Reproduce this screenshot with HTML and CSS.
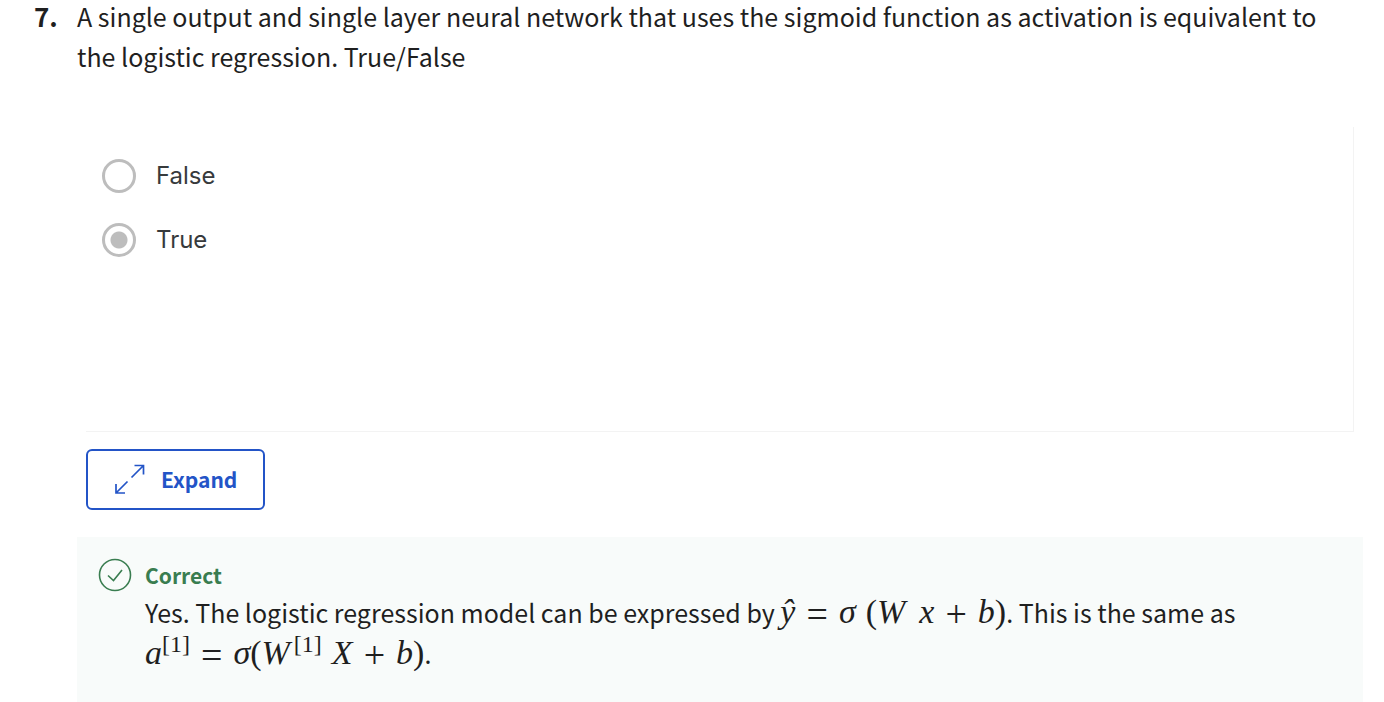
FILE: index.html
```html
<!DOCTYPE html>
<html lang="en">
<head>
<meta charset="utf-8">
<meta name="viewport" content="width=device-width, initial-scale=1">
<title>Quiz question</title>
<link rel="stylesheet" href="styles.css">
</head>
<body>
<main class="question">
  <div class="number">7.</div>
  <div class="body">
    <p class="prompt" id="prompt">A single output and single layer neural network that uses the sigmoid function as activation is equivalent to the logistic regression. True/False</p>
    <div class="options" role="radiogroup" aria-labelledby="prompt">
      <label class="option"><input class="radio" type="radio" name="answer"><span>False</span></label>
      <label class="option"><input class="radio" type="radio" name="answer" checked><span>True</span></label>
    </div>
    <button class="expand" type="button">
      <svg class="expand-icon" viewBox="0 0 32 32" aria-hidden="true"><path d="M17.5 13.500 29.5 1.500M20.500 1.500H29.500V10.500M13.500 17.500 2 29M2 20V29H11"/></svg>
      <span>Expand</span>
    </button>
    <section class="feedback">
      <svg class="check-icon" viewBox="0 0 34 34" aria-hidden="true"><circle cx="17" cy="17" r="15.500"/><path d="M10 17.500 15.500 22.500 24 12"/></svg>
      <div class="feedback-text">
        <h2 class="verdict">Correct</h2>
        <p class="explanation">Yes. The logistic regression model can be expressed by <span class="math"><i>ŷ</i><span class="op">=</span><i>σ</i><span class="paren spaced">(</span><i class="wide">W</i><i class="var">x</i><span class="op">+</span><i>b</i><span class="paren">)</span></span>. This is the same as <span class="math"><i>a</i><sup>[1]</sup><span class="op">=</span><i>σ</i><span class="paren">(</span><i class="wide">W</i><sup>[1]</sup><i class="var">X</i><span class="op">+</span><i>b</i><span class="paren">)</span></span>.</p>
      </div>
    </section>
  </div>
</main>
</body>
</html>
```
FILE: styles.css
```css
* {
  box-sizing: border-box;
}

body {
  margin: 0;
  background: #fff;
  color: #1f1f1f;
  font-family: "Noto Sans CJK SC", "Noto Sans", sans-serif;
  font-size: 25px;
  line-height: 40px;
}

.question {
  display: flex;
  padding: 0 21px 0 34px;
}

.number {
  flex: 0 0 43px;
  font-size: 26px;
  font-weight: 700;
  line-height: 32px;
}

.body {
  flex: 1;
  min-width: 0;
}

.prompt {
  margin: -4px 0 51px;
  padding-right: 32px;
}

.options {
  display: flex;
  flex-direction: column;
  gap: 24px;
  min-height: 305px;
  margin: 0 9px 17px;
  padding: 29px 16px;
  border: solid #f3f3f3;
  border-width: 0 1px 1px 0;
}

.option {
  display: flex;
  align-items: center;
  align-self: flex-start;
  gap: 20px;
  min-height: 40px;
  color: #373a3c;
  font-family: Inter, sans-serif;
  font-size: 24px;
}

.radio {
  appearance: none;
  width: 34px;
  height: 34px;
  margin: 0;
  border: 3px solid #bdbdbd;
  border-radius: 50%;
}

.radio:checked {
  background: radial-gradient(circle, #bdbdbd 8px, transparent 9px);
}

.expand {
  display: flex;
  align-items: center;
  gap: 15px;
  margin: 0 0 27px 9px;
  padding: 12px 26px;
  border: 2px solid #2354c7;
  border-radius: 6px;
  background: #fff;
  color: #2354c7;
  font: inherit;
  font-size: 21px;
  font-weight: 700;
  line-height: 33px;
}

.expand-icon {
  width: 32px;
  height: 32px;
  fill: none;
  stroke: currentColor;
  stroke-width: 1.7;
}

.feedback {
  display: flex;
  gap: 13px;
  padding: 21px 20px 28px 21px;
  background: #f8fbfa;
}

.check-icon {
  flex: 0 0 34px;
  height: 34px;
  fill: none;
  stroke: #397d50;
  stroke-width: 1.6;
}

.verdict {
  margin: 0;
  color: #397d50;
  font-size: 21px;
  line-height: 34px;
}

.explanation {
  margin: 0;
  line-height: 41px;
}

.math {
  font-family: "Liberation Serif", serif;
  font-size: 34px;
  line-height: 32px;
  white-space: nowrap;
}

.math sup {
  font-size: 24px;
  line-height: 0;
}

.op {
  margin: 0 11px;
  font-size: 38px;
  line-height: 0;
  vertical-align: -4px;
}

.var {
  margin-left: 10px;
}

.wide {
  margin-right: 4px;
}

.spaced {
  margin-left: 10px;
}
```
